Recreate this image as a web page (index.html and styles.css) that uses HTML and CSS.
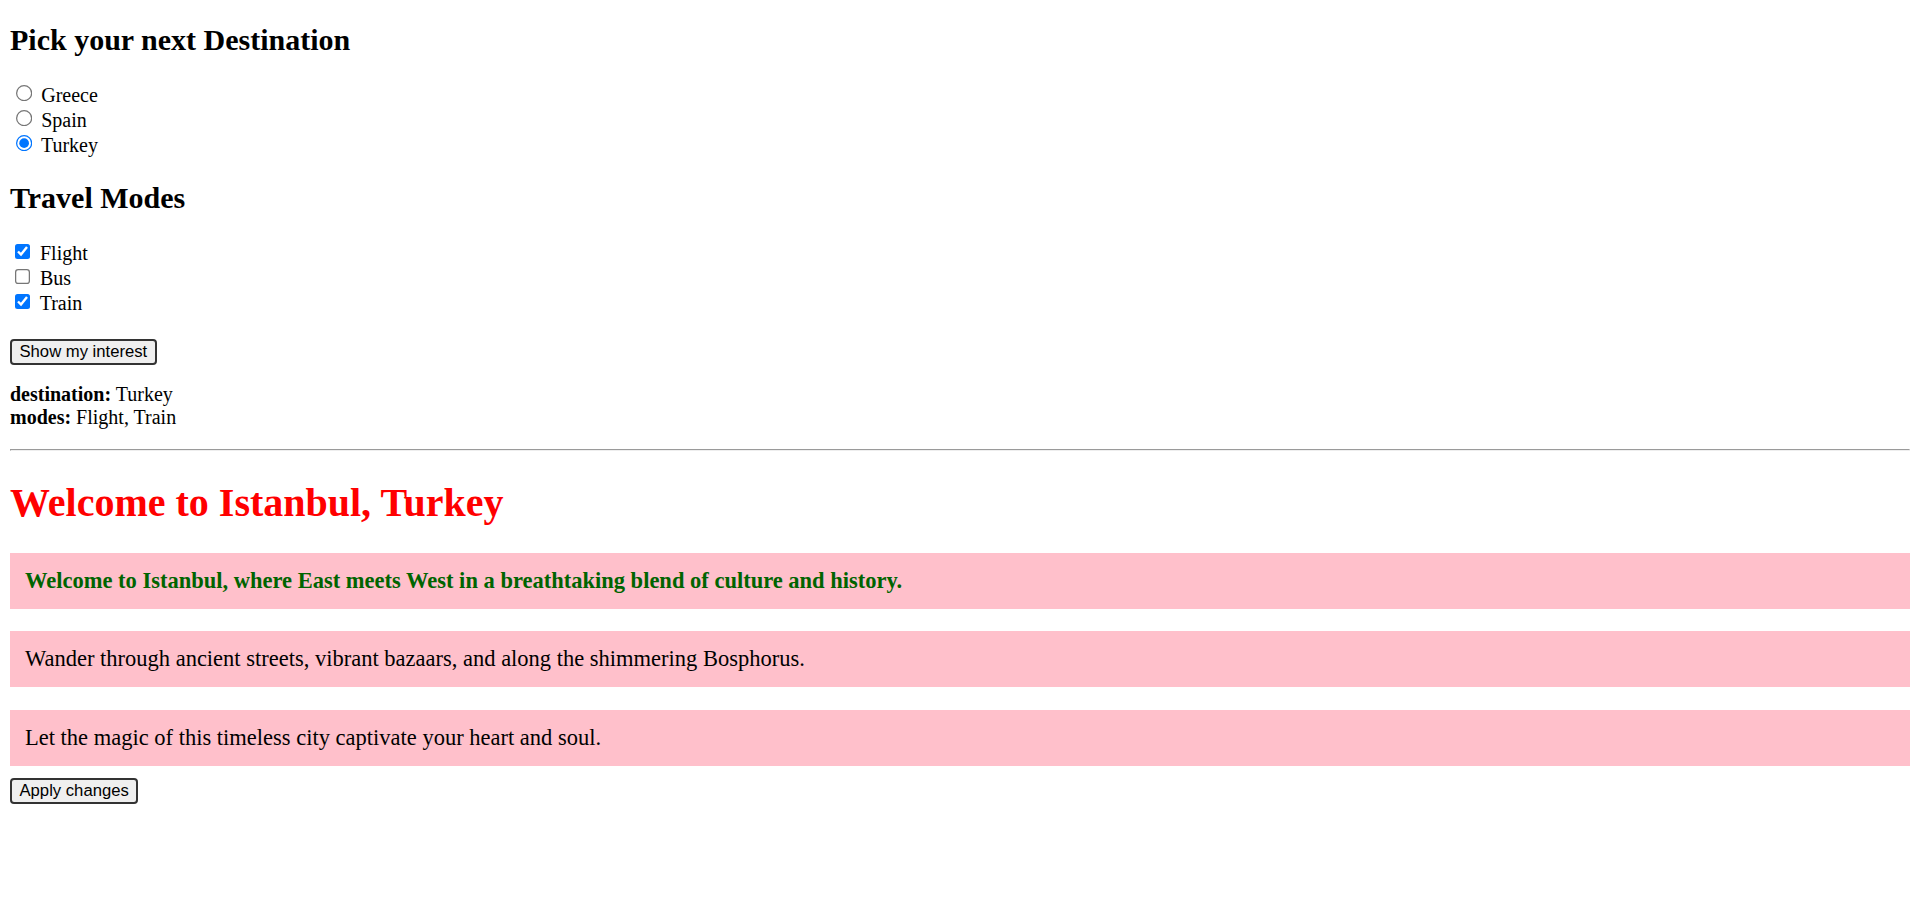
FILE: index.html
```html
<!DOCTYPE html>
<html lang="en">
<head>
<meta charset="utf-8">
<title>Destinations</title>
<link rel="stylesheet" href="styles.css">
</head>
<body class="page">
  <h2 class="section-title first">Pick your next Destination</h2>
  <div class="options">
    <div class="option"><input type="radio" name="dest" id="d1"> <label for="d1">Greece</label></div>
    <div class="option"><input type="radio" name="dest" id="d2"> <label for="d2">Spain</label></div>
    <div class="option"><input type="radio" name="dest" id="d3" checked> <label for="d3">Turkey</label></div>
  </div>
  <h2 class="section-title">Travel Modes</h2>
  <div class="options">
    <div class="option"><input type="checkbox" id="m1" checked> <label for="m1">Flight</label></div>
    <div class="option"><input type="checkbox" id="m2"> <label for="m2">Bus</label></div>
    <div class="option"><input type="checkbox" id="m3" checked> <label for="m3">Train</label></div>
  </div>
  <p class="actions"><button class="btn">Show my interest</button></p>
  <p class="summary">
    <b>destination:</b> Turkey<br>
    <b>modes:</b> Flight, Train
  </p>
  <hr class="divider">
  <h1 class="welcome">Welcome to Istanbul, Turkey</h1>
  <div class="boxes">
    <div class="box box-lead">Welcome to Istanbul, where East meets West in a breathtaking blend of culture and history.</div>
    <div class="box">Wander through ancient streets, vibrant bazaars, and along the shimmering Bosphorus.</div>
    <div class="box">Let the magic of this timeless city captivate your heart and soul.</div>
  </div>
  <button class="btn">Apply changes</button>
</body>
</html>
```
FILE: styles.css
```css
html {
  zoom: 1.25;
}
.page {
  margin: 0;
  padding: 8px 5.6px 8px 8px;
  font-family: "Liberation Serif", "Times New Roman", serif;
  font-size: 16px;
  color: #000;
  background: #fff;
}
.section-title {
  font-size: 24px;
  font-weight: bold;
  margin: 19.92px 0;
}
.section-title.first {
  margin-top: 10.1px;
}
.actions {
  margin: 18.7px 0 15px;
}
.summary {
  margin: 15px 0 16px;
}
.btn {
  font-family: "Liberation Sans", Arial, sans-serif;
  font-size: 13.333px;
  color: #000;
  background: #efefef;
  border: 1.6px solid #333;
  border-radius: 3.2px;
  padding: 0.8px 6px;
}
.divider {
  margin: 7px 0 8px;
}
.welcome {
  color: red;
  font-size: 32px;
  margin: 21.9px 0 21.44px;
}
.boxes {
  display: flex;
  flex-direction: column;
  gap: 18px;
  margin-bottom: 9.6px;
}
.box {
  background: pink;
  font-size: 18px;
  padding: 12px;
}
.box-lead {
  color: darkgreen;
  font-weight: bold;
}
```
